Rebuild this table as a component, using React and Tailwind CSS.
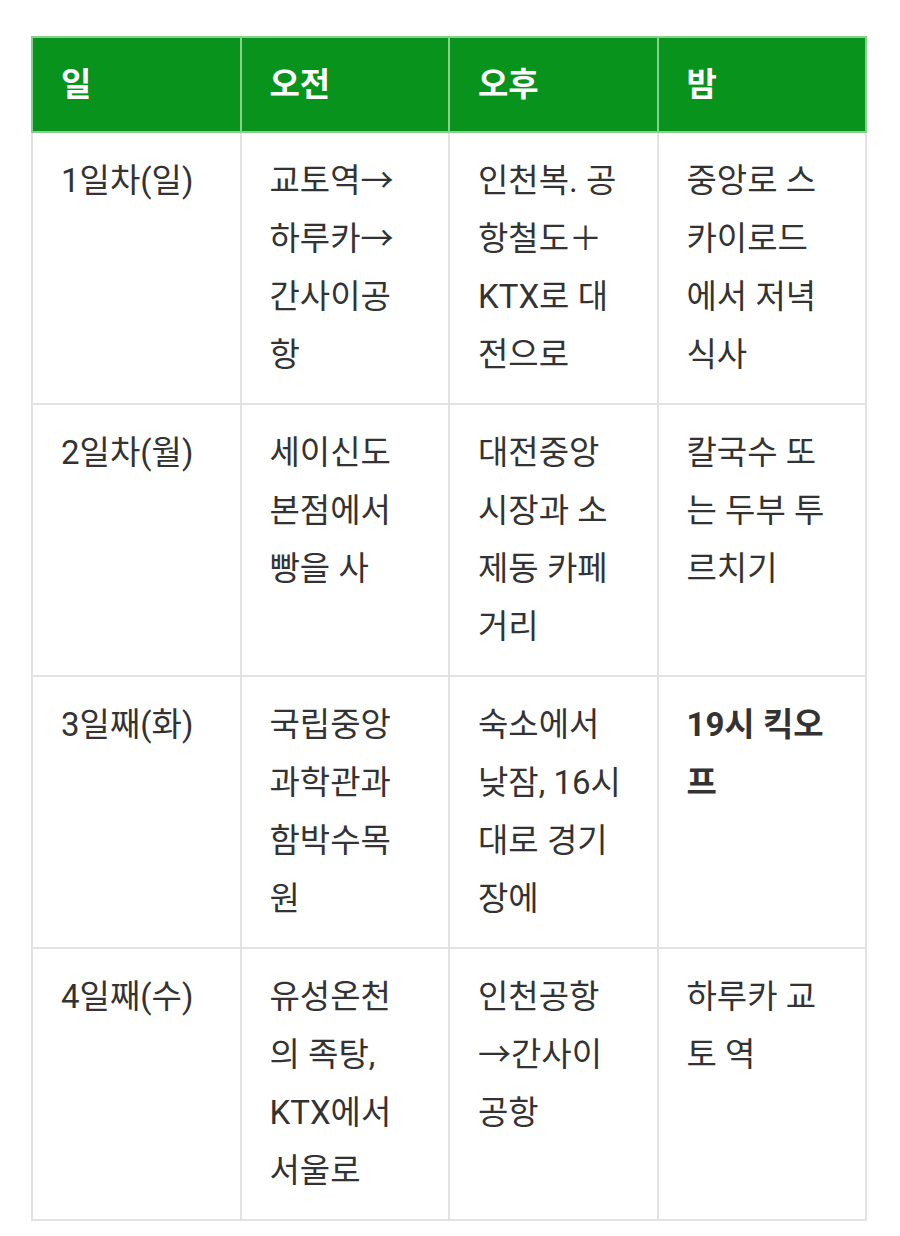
import React from "react";

// lines are fixed to match the wrapping of the original
const rows = [
  [["1일차(일)"], ["교토역→", "하루카→", "간사이공", "항"], ["인천복. 공", "항철도＋", "KTX로 대", "전으로"], ["중앙로 스", "카이로드", "에서 저녁", "식사"]],
  [["2일차(월)"], ["세이신도", "본점에서", "빵을 사"], ["대전중앙", "시장과 소", "제동 카페", "거리"], ["칼국수 또", "는 두부 투", "르치기"]],
  [["3일째(화)"], ["국립중앙", "과학관과", "함박수목", "원"], ["숙소에서", "낮잠, 16시", "대로 경기", "장에"], ["19시 킥오", "프"]],
  [["4일째(수)"], ["유성온천", "의 족탕,", "KTX에서", "서울로"], ["인천공항", "→간사이", "공항"], ["하루카 교", "토 역"]],
];

const headers = ["일", "오전", "오후", "밤"];

export default function App() {
  return (
    <div
      className="min-h-[1236px] bg-white pt-[36px] pl-[31px]"
      style={{ fontFamily: 'Roboto, "Noto Sans CJK KR", sans-serif' }}
    >
      <table className="w-[836px] table-fixed border-collapse">
        <thead>
          <tr>
            {headers.map((h) => (
              <th
                key={h}
                className="h-[95px] border-2 border-[#86d08f] bg-[#08931c] px-[28px] text-left align-middle text-[33px] font-bold leading-[58px] text-white"
              >
                {h}
              </th>
            ))}
          </tr>
        </thead>
        <tbody>
          {rows.map((row, i) => (
            <tr key={i}>
              {row.map((lines, j) => {
                const bold = i === 2 && j === 3;
                return (
                  <td
                    key={j}
                    className={`h-[270px] border-2 border-[#e2e2e2] px-[28px] py-[19px] align-top text-[33px] leading-[58px] whitespace-nowrap text-[#333333] ${bold ? "font-bold" : ""}`}
                  >
                    {lines.map((l, k) => (
                      <div key={k}>{l}</div>
                    ))}
                  </td>
                );
              })}
            </tr>
          ))}
        </tbody>
      </table>
    </div>
  );
}
